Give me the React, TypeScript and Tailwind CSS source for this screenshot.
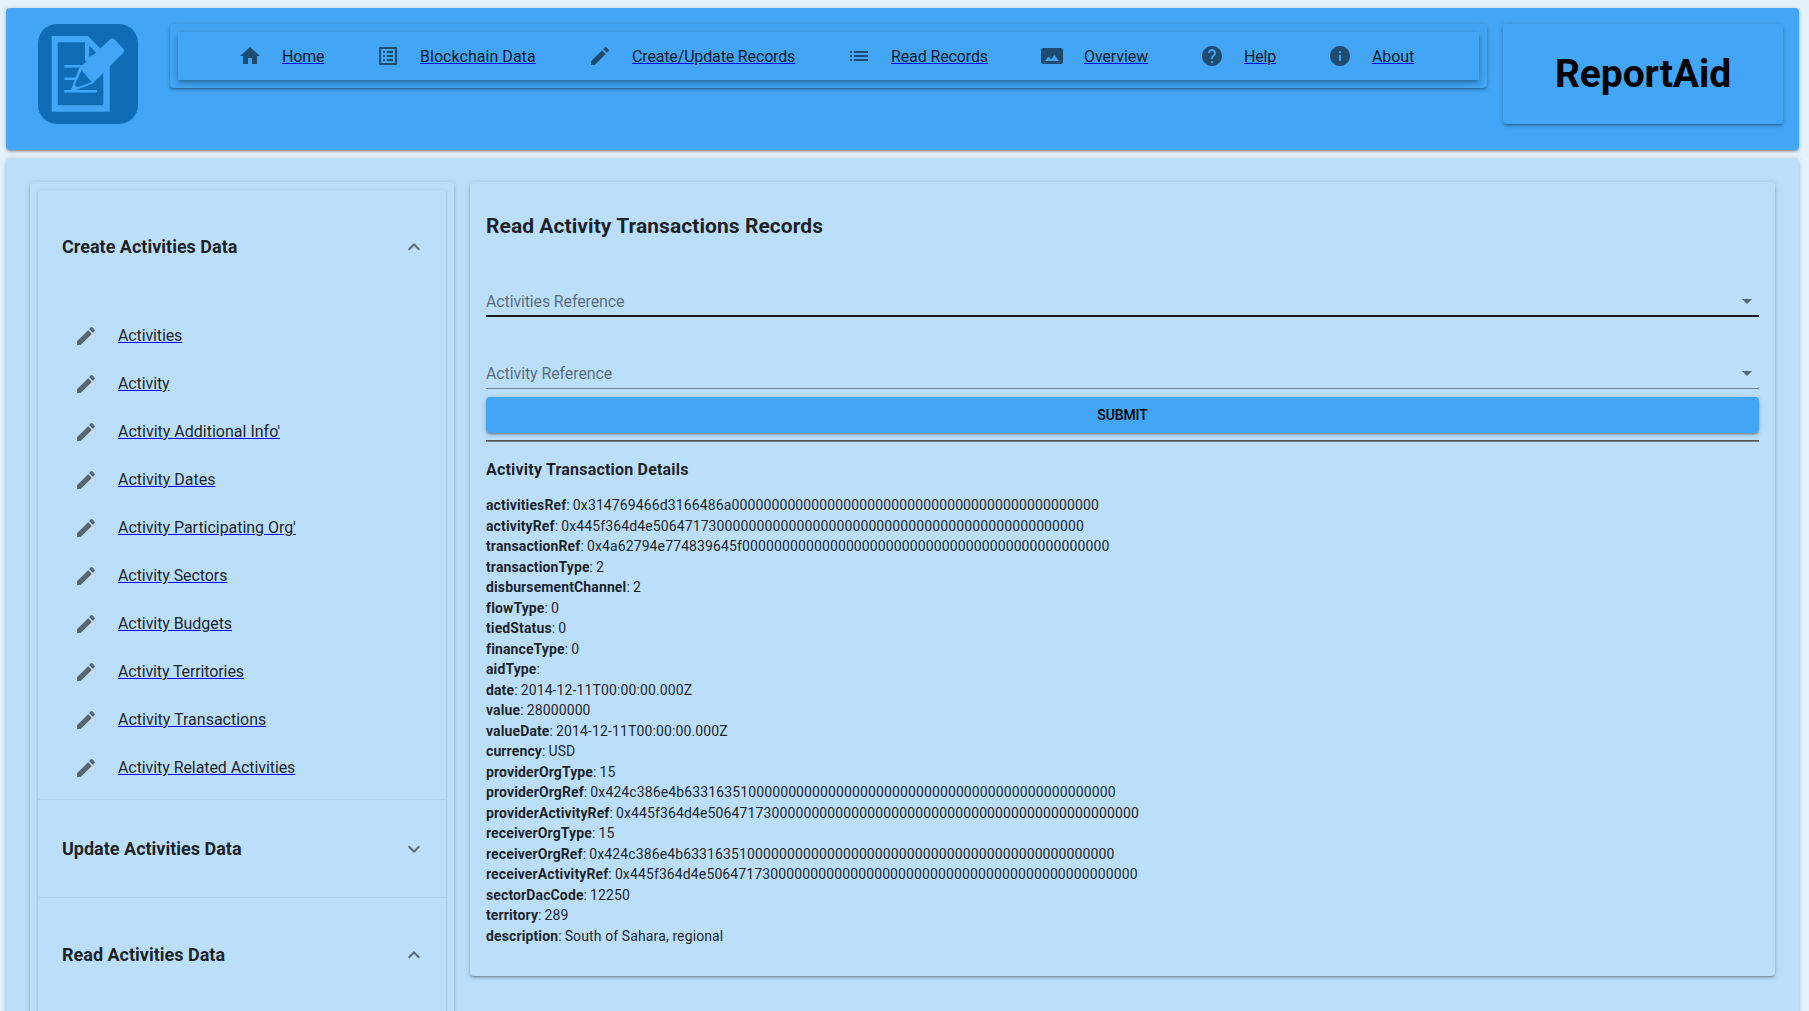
import React from "react";

const ICONS = {
  home: "M10 20v-6h4v6h5v-8h3L12 3 2 12h3v8z",
  listAlt:
    "M19 5v14H5V5h14m1.1-2H3.9c-.5 0-.9.4-.9.9v16.2c0 .4.4.9.9.9h16.2c.4 0 .9-.5.9-.9V3.9c0-.5-.5-.9-.9-.9zM11 7h6v2h-6V7zm0 4h6v2h-6v-2zm0 4h6v2h-6zM7 7h2v2H7zm0 4h2v2H7zm0 4h2v2H7z",
  create:
    "M3 17.25V21h3.75L17.81 9.94l-3.75-3.75L3 17.25zM20.71 7.04c.39-.39.39-1.02 0-1.41l-2.34-2.34a.9959.9959 0 0 0-1.41 0l-1.83 1.83 3.75 3.75 1.83-1.83z",
  list: "M3 13h2v-2H3v2zm0 4h2v-2H3v2zm0-8h2V7H3v2zm4 4h14v-2H7v2zm0 4h14v-2H7v2zM7 7v2h14V7H7z",
  panorama:
    "M23 18V6c0-1.1-.9-2-2-2H3c-1.1 0-2 .9-2 2v12c0 1.1.9 2 2 2h18c1.1 0 2-.9 2-2zM8.5 12.5l2.5 3.01L14.5 11l4.5 6H5l3.5-4.5z",
  help: "M12 2C6.48 2 2 6.48 2 12s4.48 10 10 10 10-4.48 10-10S17.52 2 12 2zm1 17h-2v-2h2v2zm2.07-7.75l-.9.92C13.45 12.9 13 13.5 13 15h-2v-.5c0-1.1.45-2.1 1.17-2.83l1.24-1.26c.37-.36.59-.86.59-1.41 0-1.1-.9-2-2-2s-2 .9-2 2H8c0-2.21 1.79-4 4-4s4 1.79 4 4c0 .88-.36 1.68-.93 2.25z",
  info: "M12 2C6.48 2 2 6.48 2 12s4.48 10 10 10 10-4.48 10-10S17.52 2 12 2zm1 15h-2v-6h2v6zm0-8h-2V7h2v2z",
  less: "M12 8l-6 6 1.41 1.41L12 10.83l4.59 4.58L18 14z",
  more: "M16.59 8.59L12 13.17 7.41 8.59 6 10l6 6 6-6z",
  drop: "M7 10l5 5 5-5z",
};

type IconName = keyof typeof ICONS;

function Icon({ name }: { name: IconName }) {
  return (
    <svg viewBox="0 0 24 24" className="size-6 shrink-0 fill-black/54">
      <path d={ICONS[name]} />
    </svg>
  );
}

function IconLink({ icon, label, className }: { icon: IconName; label: string; className: string }) {
  return (
    <a
      href="#"
      className={"flex h-12 items-center gap-5 text-base whitespace-nowrap text-black/87 underline decoration-[#0000ee] " + className}
    >
      <Icon name={icon} />
      <span>{label}</span>
    </a>
  );
}

const NAV: [IconName, string, string][] = [
  ["home", "Home", "w-[138px] tracking-[-0.2px]"],
  ["listAlt", "Blockchain Data", "w-[212px] tracking-[0.04px]"],
  ["create", "Create/Update Records", "w-[259px] tracking-[-0.15px]"],
  ["list", "Read Records", "w-[193px] tracking-[-0.12px]"],
  ["panorama", "Overview", "w-[160px] tracking-[-0.1px]"],
  ["help", "Help", "w-[128px] tracking-[-0.2px]"],
  ["info", "About", "tracking-[-0.1px]"],
];

const CREATE_ITEMS: [string, string][] = [
  ["Activities", "tracking-[-0.12px]"],
  ["Activity", "tracking-[-0.1px]"],
  ["Activity Additional Info'", "tracking-normal"],
  ["Activity Dates", "tracking-normal"],
  ["Activity Participating Org'", "tracking-[-0.04px]"],
  ["Activity Sectors", "tracking-[-0.08px]"],
  ["Activity Budgets", "tracking-[-0.07px]"],
  ["Activity Territories", "tracking-[-0.12px]"],
  ["Activity Transactions", "tracking-normal"],
  ["Activity Related Activities", "tracking-[-0.08px]"],
];

const DETAILS: [string, string][] = [
  ["activitiesRef", "0x314769466d3166486a" + "0".repeat(46)],
  ["activityRef", "0x445f364d4e50647173" + "0".repeat(46)],
  ["transactionRef", "0x4a62794e774839645f" + "0".repeat(46)],
  ["transactionType", "2"],
  ["disbursementChannel", "2"],
  ["flowType", "0"],
  ["tiedStatus", "0"],
  ["financeType", "0"],
  ["aidType", ""],
  ["date", "2014-12-11T00:00:00.000Z"],
  ["value", "28000000"],
  ["valueDate", "2014-12-11T00:00:00.000Z"],
  ["currency", "USD"],
  ["providerOrgType", "15"],
  ["providerOrgRef", "0x424c386e4b63316351" + "0".repeat(46)],
  ["providerActivityRef", "0x445f364d4e50647173" + "0".repeat(46)],
  ["receiverOrgType", "15"],
  ["receiverOrgRef", "0x424c386e4b63316351" + "0".repeat(46)],
  ["receiverActivityRef", "0x445f364d4e50647173" + "0".repeat(46)],
  ["sectorDacCode", "12250"],
  ["territory", "289"],
  ["description", "South of Sahara, regional"],
];

const LOW =
  "shadow-[0px_1px_3px_0px_rgba(0,0,0,0.2),0px_1px_1px_0px_rgba(0,0,0,0.14),0px_2px_1px_-1px_rgba(0,0,0,0.12)]";
const RAISED =
  "shadow-[0px_1px_5px_0px_rgba(0,0,0,0.2),0px_2px_2px_0px_rgba(0,0,0,0.14),0px_3px_1px_-2px_rgba(0,0,0,0.12)]";

function Logo() {
  return (
    <svg viewBox="0 0 100 100" className="size-[100px] shrink-0">
      <rect width="100" height="100" rx="19" fill="#0f6db7" />
      <path
        d="M13.7 12H50L71.700 34V87.700H13.700ZM19.700 18.300V81.300H65.300V37H47V18.300ZM51.200 21.500V32.700L58.300 29Z"
        fill="#42a5f5"
        fillRule="evenodd"
      />
      <path d="M26.300 42.200H46M26.300 54.700H40M26.300 67.300H59" stroke="#42a5f5" strokeWidth="2.6" />
      <path
        d="M72.500 15Q74.500 13.500 76.500 15.200L85.500 24.800Q87 26.700 85.500 28.500L54.700 59.500L35 67.300H32.500L41 44.500Z"
        fill="#42a5f5"
      />
      <path d="M43.500 46L53.600 58L39.500 63.300L36.800 61Z" fill="#0f6db7" />
      <path d="M39 65.800L54 60.800L55 66H39Z" fill="#0f6db7" />
    </svg>
  );
}

function PanelHeader({ title, open, className }: { title: string; open: boolean; className: string }) {
  return (
    <div className={"flex items-center justify-between pr-5 pl-6 " + className}>
      <h3 className={open ? "pb-0.5 text-[18px] font-bold text-black/87" : "text-[18px] font-bold text-black/87"}>
        {title}
      </h3>
      <Icon name={open ? "less" : "more"} />
    </div>
  );
}

export default function App() {
  return (
    <div className="flex h-[1011px] flex-col gap-2 overflow-hidden bg-[#e3f2fd] pt-2 pr-2.5 pl-1.5 font-['Roboto',sans-serif]">
      <header className={"flex h-[142px] shrink-0 items-start gap-4 rounded bg-[#42a5f5] pt-4 pr-4 pl-8 " + RAISED}>
        <Logo />
        <div className={"ml-4 h-16 flex-1 rounded bg-[#42a5f5] p-2 " + RAISED}>
          <nav className="flex h-12 bg-[#42a5f5] pl-[60px] shadow-[0px_2px_4px_-1px_rgba(0,0,0,0.2),0px_4px_5px_0px_rgba(0,0,0,0.14),0px_1px_10px_0px_rgba(0,0,0,0.12)] [&_span]:pt-0.5">
            {NAV.map(([icon, label, className]) => (
              <IconLink key={label} icon={icon} label={label} className={className} />
            ))}
          </nav>
        </div>
        <div className={"flex h-[100px] w-[280px] items-center justify-center rounded bg-[#42a5f5] " + RAISED}>
          <h1 className="pt-px text-[39px] font-bold tracking-[-0.1px] text-black">ReportAid</h1>
        </div>
      </header>

      <main className={"flex min-h-[1000px] items-start gap-4 rounded bg-[#bbdefb] px-6 pt-6 " + RAISED}>
        <aside className={"h-[1000px] w-[424px] shrink-0 rounded bg-[#bbdefb] p-2 " + RAISED}>
          <div className={"h-full rounded-[2px] bg-[#bbdefb] " + LOW}>
            <PanelHeader title="Create Activities Data" open className="h-[114px]" />
            <div className="flex h-[495px] flex-col pt-2 pl-9">
              {CREATE_ITEMS.map(([label, className]) => (
                <IconLink key={label} icon="create" label={label} className={className} />
              ))}
            </div>
            <PanelHeader title="Update Activities Data" open={false} className="h-[98px] border-t border-black/5" />
            <PanelHeader title="Read Activities Data" open className="h-[115px] border-t border-black/5" />
          </div>
        </aside>

        <section className={"h-[794px] flex-1 rounded bg-[#bbdefb] px-4 pt-7 text-black/87 " + RAISED}>
          <h2 className="text-[21px] leading-8 font-bold tracking-[0.06px]">Read Activity Transactions Records</h2>
          <div className="mt-11 flex h-[31px] items-center justify-between border-b-2 border-black/87 text-base text-black/54">
            <span className="pt-0.5 tracking-[-0.14px]">Activities Reference</span>
            <Icon name="drop" />
          </div>
          <div className="mt-[41px] flex h-[31px] items-center justify-between border-b border-black/42 pb-px text-base text-black/54">
            <span className="pt-0.5 tracking-[-0.1px]">Activity Reference</span>
            <Icon name="drop" />
          </div>
          <button
            className={
              "mt-2 flex h-9 w-full items-center justify-center rounded bg-[#42a5f5] text-sm font-medium tracking-[-0.1px] text-black uppercase " +
              RAISED
            }
          >
            Submit
          </button>
          <hr className="mt-[7px] h-0.5 border-t border-b border-t-[#555] border-b-[#808080]" />
          <h3 className="mt-4 text-base leading-6 font-bold tracking-[0.2px]">Activity Transaction Details</h3>
          <div className="mt-[13px] text-sm leading-[20.5px] tracking-[0.12px]">
            {DETAILS.map(([key, value]) => (
              <p key={key}>
                <b className="tracking-[0.12px]">{key}</b>:<span className="-ml-[0.6px]"> {value}</span>
              </p>
            ))}
          </div>
        </section>
      </main>
    </div>
  );
}
